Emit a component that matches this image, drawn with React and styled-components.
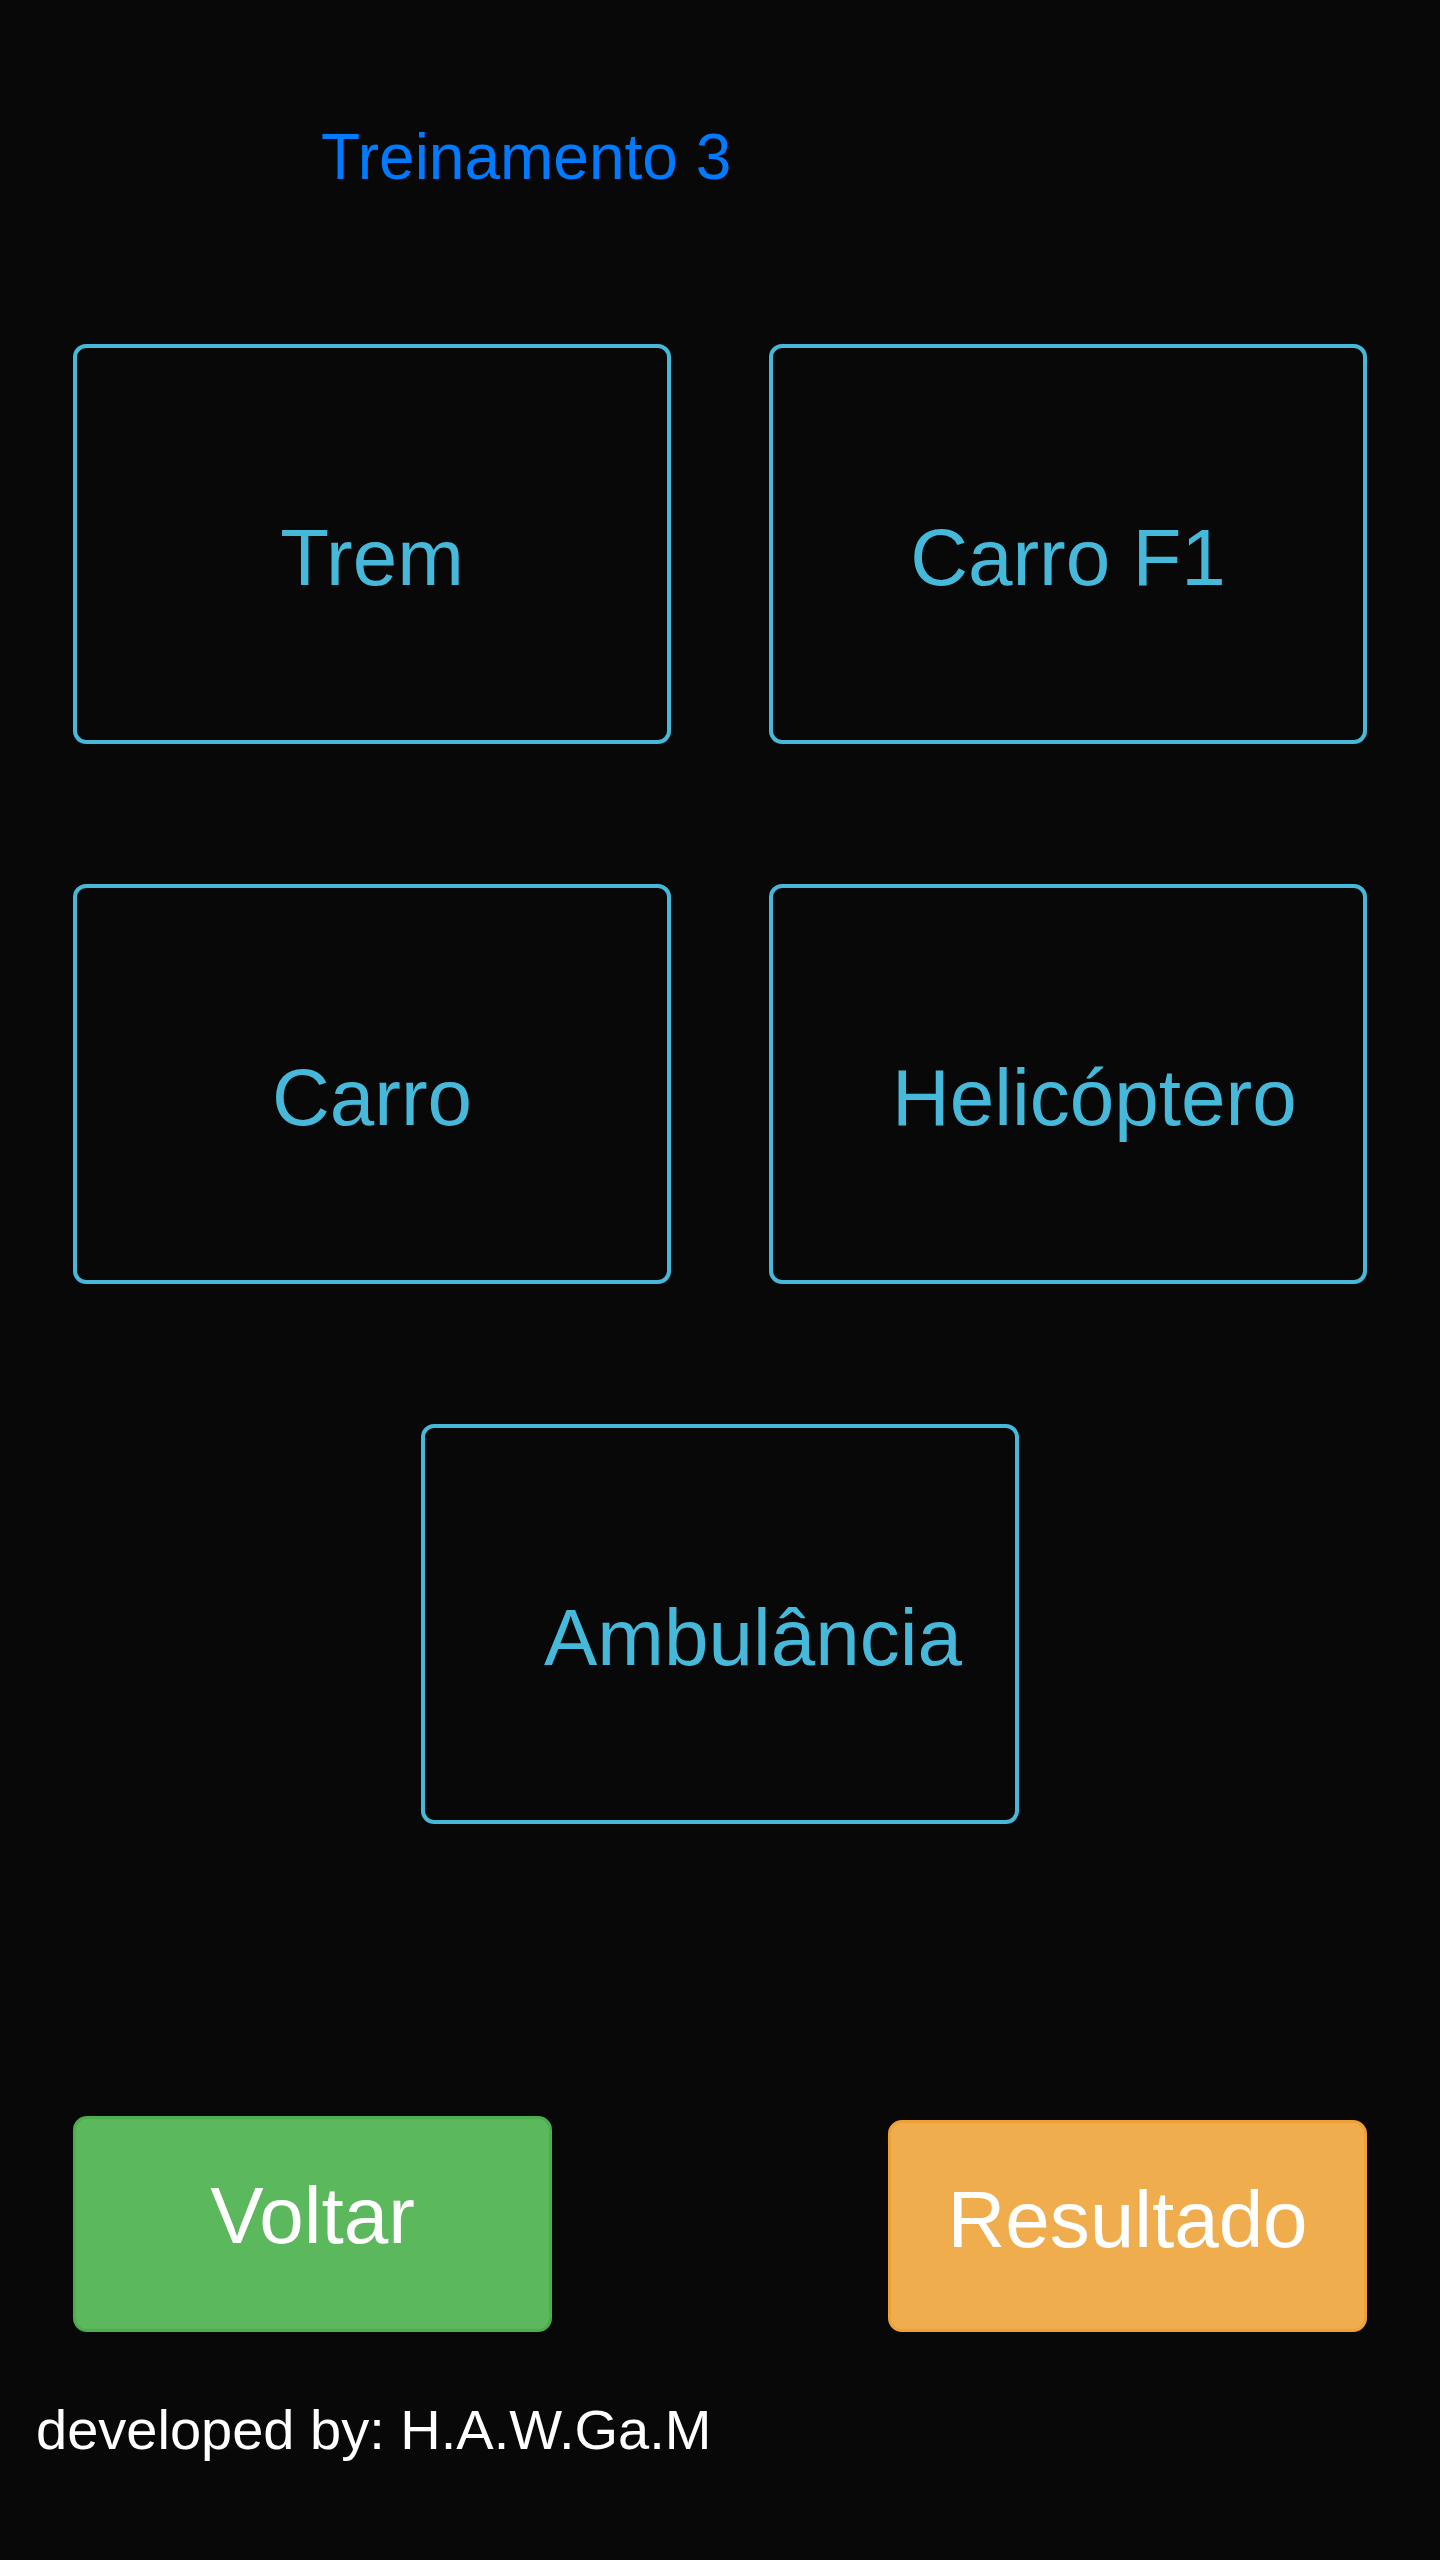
import React from 'react';
import styled, { createGlobalStyle } from 'styled-components';

const GlobalStyle = createGlobalStyle`
  html, body {
    margin: 0;
    padding: 0;
    background: #080808;
  }
  body {
    font-family: "Liberation Sans", Arial, sans-serif;
  }
`;

const Page = styled.div`
  min-height: 2560px;
  background: #080808;
  display: flex;
  flex-direction: column;
`;

const Title = styled.h1`
  margin: 125px 0 0 321px;
  font-size: 64px;
  line-height: 64px;
  font-weight: 400;
  color: #007bff;
`;

const Grid = styled.div`
  margin-top: 155px;
  display: grid;
  grid-template-columns: repeat(2, 598px);
  column-gap: 98px;
  row-gap: 140px;
  justify-content: center;
`;

const Option = styled.div`
  box-sizing: border-box;
  height: 400px;
  width: 598px;
  padding: 170px 119px 0;
  border: 4px solid #46b8da;
  border-radius: 13px;
  color: #46b8da;
  font-size: 80px;
  line-height: 80px;
  text-align: center;
  white-space: nowrap;
  cursor: pointer;
  grid-column: ${(p) => (p.$wide ? '1 / -1' : 'auto')};
  justify-self: center;
`;

const Actions = styled.div`
  margin-top: 292px;
  padding: 0 73px;
  display: flex;
  justify-content: space-between;
  align-items: flex-end;
`;

const Button = styled.button`
  box-sizing: border-box;
  width: 479px;
  height: ${(p) => p.$h}px;
  padding: 57px 0 0;
  border: 3px solid ${(p) => p.$border};
  border-radius: 14px;
  background: ${(p) => p.$bg};
  color: #fff;
  font-family: "Liberation Sans", Arial, sans-serif;
  font-size: 80px;
  line-height: 80px;
  display: flex;
  justify-content: center;
  align-items: flex-start;
  cursor: pointer;
`;

const Footer = styled.p`
  margin: 70px 0 0 36px;
  font-size: 56px;
  line-height: 56px;
  color: #fff;
`;

const options = ['Trem', 'Carro F1', 'Carro', 'Helicóptero', 'Ambulância'];

const App = () => {
  return (
    <Page>
      <GlobalStyle />
      <Title>Treinamento 3</Title>
      <Grid>
        {options.map((name, i) => (
          <Option key={name} $wide={i === options.length - 1}>
            {name}
          </Option>
        ))}
      </Grid>
      <Actions>
        <Button $bg="#5cb85c" $border="#4cae4c" $h={216}>Voltar</Button>
        <Button $bg="#f0ad4e" $border="#eea236" $h={212}>Resultado</Button>
      </Actions>
      <Footer>developed by: H.A.W.Ga.M</Footer>
    </Page>
  );
};

export default App;
